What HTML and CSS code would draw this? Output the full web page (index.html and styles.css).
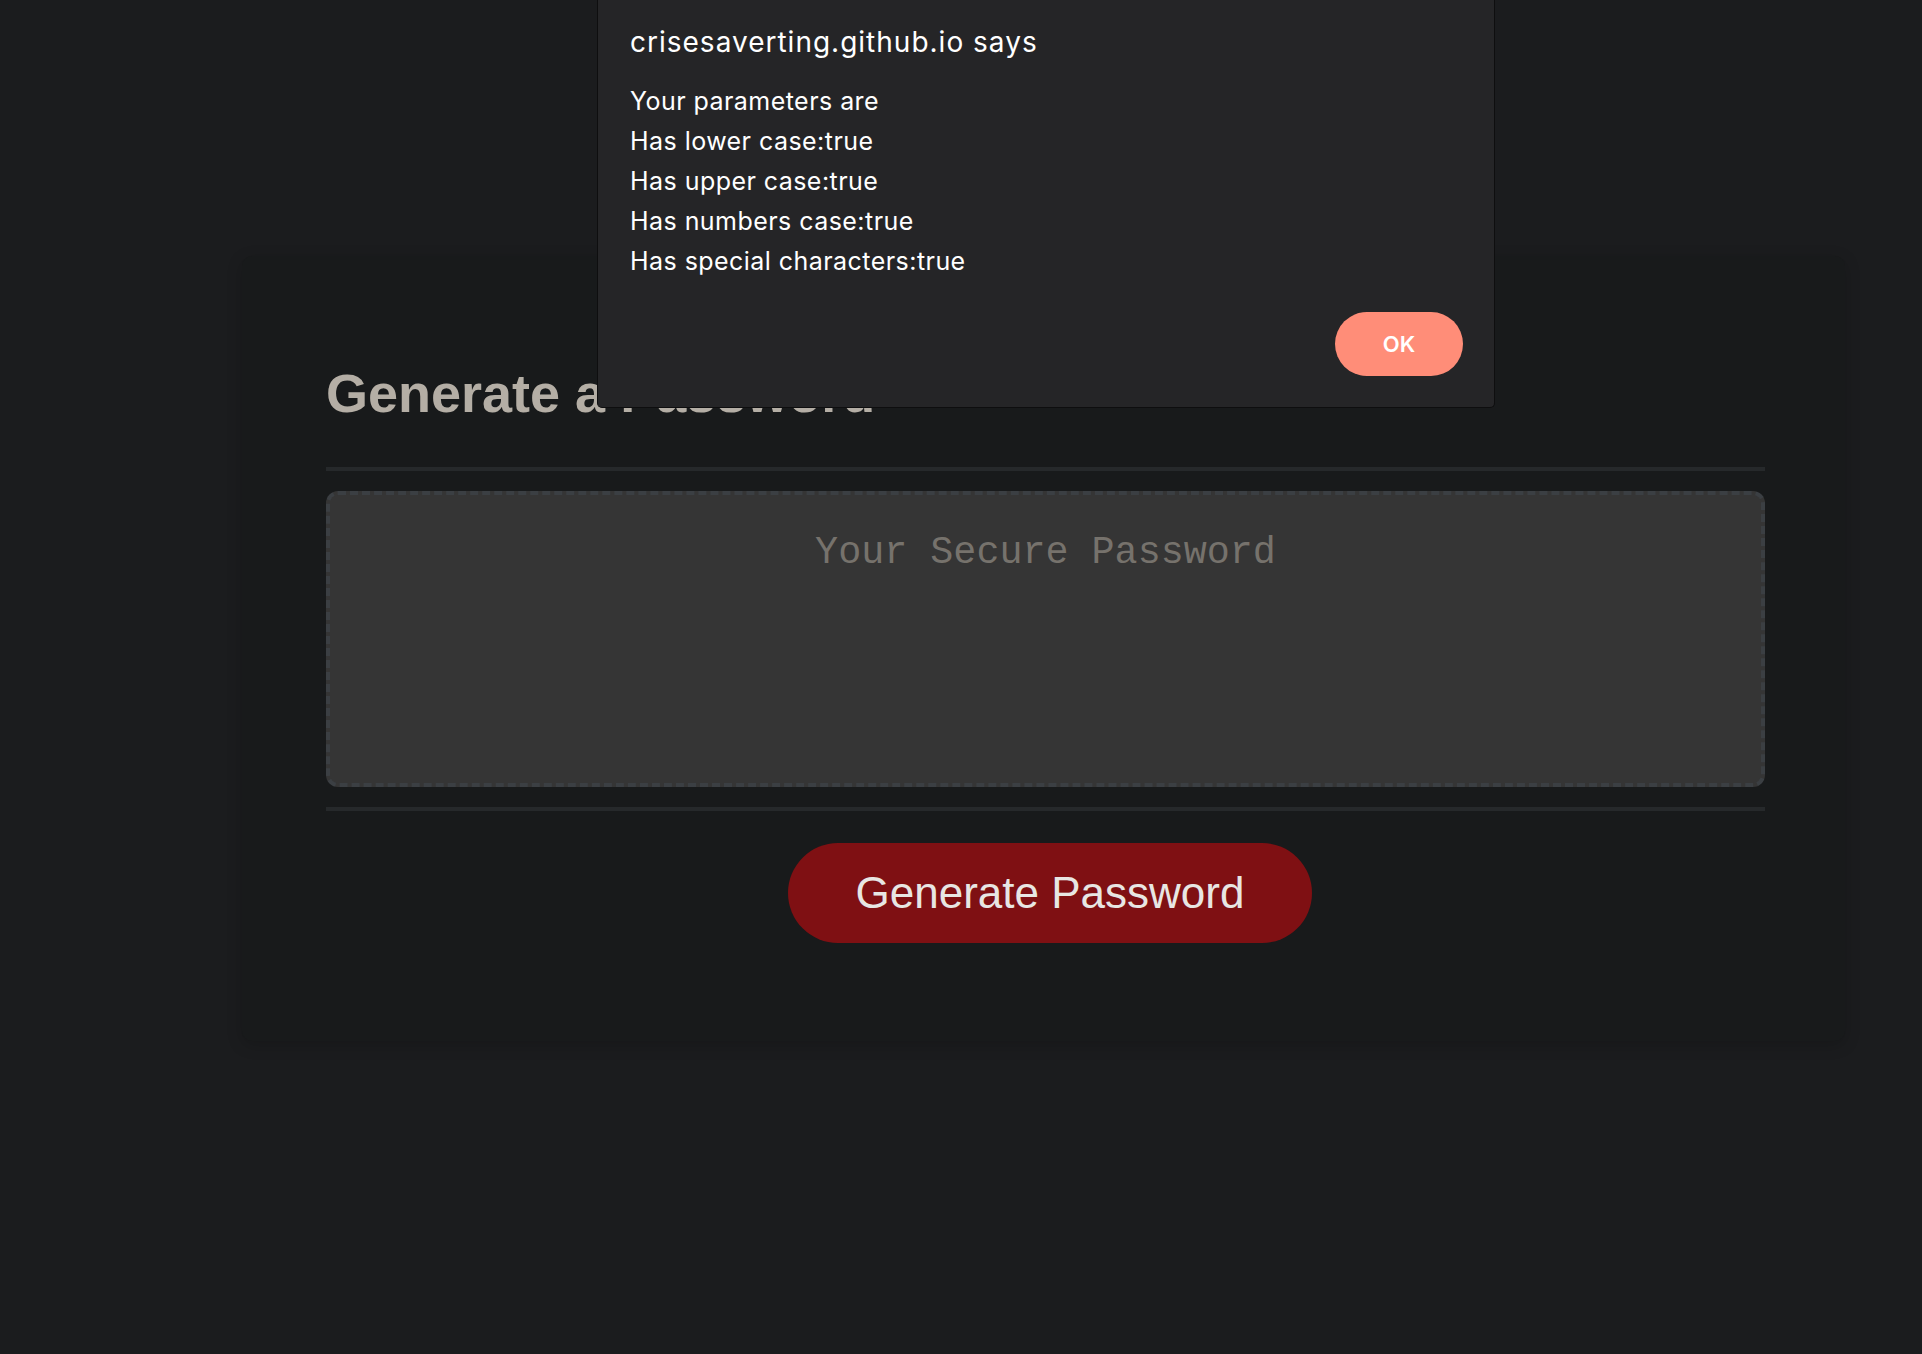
FILE: index.html
```html
<!DOCTYPE html>
<html lang="en">
<head>
<meta charset="utf-8">
<title>Password Generator</title>
<link rel="stylesheet" href="styles.css">
</head>
<body>
<div class="wrapper">
  <div class="card">
    <div class="card-header">
      <h2>Generate a Password</h2>
    </div>
    <div class="card-body">
      <textarea readonly class="password" placeholder="Your Secure Password" aria-label="Generated Password"></textarea>
    </div>
    <div class="card-footer">
      <button class="btn">Generate Password</button>
    </div>
  </div>
</div>

<div class="dialog" role="alertdialog">
  <div class="dialog-title">crisesaverting.github.io says</div>
  <div class="dialog-body">
    <div>Your parameters are</div>
    <div>Has lower case:true</div>
    <div>Has upper case:true</div>
    <div>Has numbers case:true</div>
    <div>Has special characters:true</div>
  </div>
  <div class="dialog-actions">
    <button class="ok">OK</button>
  </div>
</div>
</body>
</html>
```

FILE: styles.css
```css
*, *::before, *::after { box-sizing: border-box; }

html, body {
  margin: 0;
  padding: 0;
  height: 100%;
}

body {
  background: #1b1c1e;
  font-family: "Liberation Sans", Arial, sans-serif;
  overflow: hidden;
}

.wrapper {
  padding-top: 256px;
  padding-left: 242px;
}

.card {
  width: 1603px;
  background: #181a1b;
  border-radius: 10px;
  box-shadow: rgba(0, 0, 0, 0.18) 0 4px 16px 0;
  padding: 62px 80px 98px 84px;
}

.card-header h2 {
  margin: 45px 0 44px;
  font-size: 54px;
  line-height: 60px;
  font-weight: 700;
  color: #b4aea5;
}

.card-header::after,
.card-footer::before {
  content: "";
  display: block;
  height: 4px;
  background: #26292b;
}

.password {
  display: block;
  width: 100%;
  height: 296px;
  margin: 20px 0;
  padding: 36px 30px 0;
  background: #353535;
  border: 4px dashed #3b3f43;
  border-radius: 12px;
  resize: none;
  overflow: hidden;
  font-family: "Liberation Mono", "Courier New", monospace;
  font-size: 38.4px;
  text-align: center;
  color: #e8e6e3;
  outline: none;
}

.password::placeholder {
  color: #76726c;
  opacity: 1;
}

.card-footer {
  text-align: center;
}

.btn {
  display: inline-block;
  margin: 32px 32px 0 41px;
  padding: 28px 68px;
  border: none;
  border-radius: 50px;
  background: #7f1013;
  color: #e8e6e3;
  font-family: "Liberation Sans", Arial, sans-serif;
  font-size: 44px;
  line-height: 44px;
  cursor: pointer;
}

.dialog {
  position: fixed;
  top: 0;
  left: 597px;
  width: 898px;
  height: 408px;
  background: #252527;
  border: 1px solid #0e0e0f;
  border-top: none;
  border-radius: 0 0 5px 5px;
  padding: 24px 31px 0 32px;
  display: flex;
  flex-direction: column;
  font-family: Inter, "Noto Sans", sans-serif;
  color: #ffffff;
}

.dialog-title {
  font-size: 28px;
  line-height: 36px;
  font-weight: 400;
  letter-spacing: 1px;
}

.dialog-body {
  margin-top: 21px;
  font-size: 25px;
  line-height: 40px;
  letter-spacing: 0.45px;
}

.dialog-actions {
  margin-top: 31px;
  display: flex;
  justify-content: flex-end;
}

.ok {
  width: 128px;
  height: 64px;
  border: none;
  border-radius: 32px;
  background: #ff8d78;
  color: #ffffff;
  font-family: Inter, "Noto Sans", sans-serif;
  font-size: 22px;
  font-weight: 600;
  cursor: pointer;
}
```
